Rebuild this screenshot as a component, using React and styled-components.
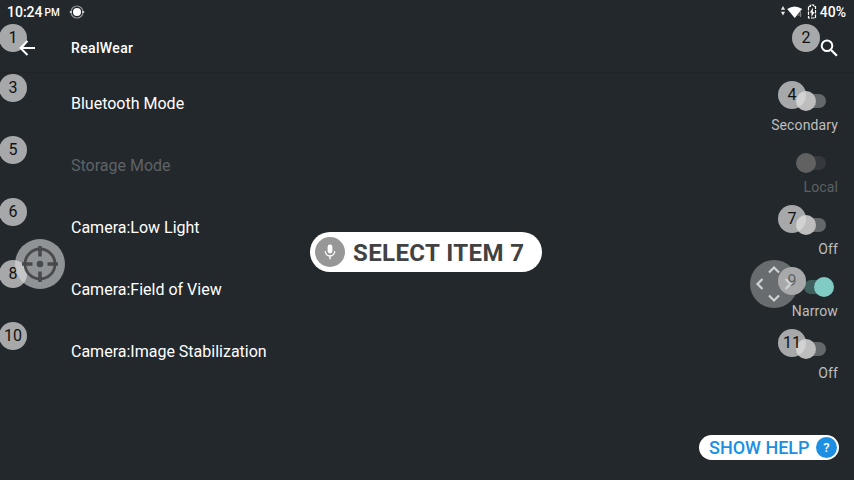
import React from "react";
import styled, { createGlobalStyle } from "styled-components";

const Global = createGlobalStyle`
  * { box-sizing: border-box; }
  body { margin: 0; background: #23282c; font-family: Roboto, "Noto Sans", sans-serif; color: #fff; }
`;

const Screen = styled.div`
  position: relative;
  display: flex;
  flex-direction: column;
  width: 854px;
  height: 480px;
  overflow: hidden;
  background: #23282c;
`;

const StatusBar = styled.header`
  display: flex;
  align-items: center;
  height: 24px;
  padding: 0 8px 0 7px;
  font-size: 14px;
  font-weight: 500;
  line-height: 24px;
`;

const Time = styled.span`
  font-size: 14px;
`;

const Meridiem = styled.span`
  margin: 2px 9px 0 2px;
  font-size: 10px;
`;

const StatusIcons = styled.div`
  display: flex;
  align-items: center;
  margin-left: auto;
`;

const Percent = styled.span`
  margin-left: 3px;
`;

const AppBar = styled.div`
  position: relative;
  display: flex;
  align-items: center;
  height: 49px;
  padding: 0 16px 0 19px;
  border-bottom: 1px solid #202427;
`;

const BackButton = styled.span`
  position: relative;
  z-index: 2;
  display: flex;
`;

const Title = styled.h1`
  margin: 0 auto 0 36px;
  font-size: 14px;
  font-weight: 500;
  letter-spacing: 0.35px;
`;

const List = styled.main`
  display: flex;
  flex-direction: column;
`;

const Row = styled.div`
  position: relative;
  display: flex;
  justify-content: space-between;
  height: 62px;
  padding: 0 16px 0 71px;
`;

const Label = styled.div`
  font-size: 16px;
  line-height: 61px;
  color: ${(p) => (p.$disabled ? "#5f6366" : "#fff")};
`;

const Control = styled.div`
  display: flex;
  flex-direction: column;
  align-items: flex-end;
  padding-top: 18px;
`;

const Track = styled.div`
  position: relative;
  width: 29px;
  height: 14px;
  margin: 3px ${(p) => (p.$on ? 5 : 12)}px 0 0;
  border-radius: 7px;
  background: ${(p) => (p.$on ? "#3f5f5f" : p.$disabled ? "#35393d" : "#64686b")};
`;

const Thumb = styled.div`
  position: absolute;
  top: -3px;
  left: ${(p) => (p.$on ? 10.4 : -1.3)}px;
  width: 20px;
  height: 20px;
  border-radius: 50%;
  background: ${(p) => (p.$on ? "#80cbc4" : p.$disabled ? "#616161" : "#bdbdbd")};
`;

const Value = styled.div`
  margin-top: 9px;
  font-size: 14px;
  line-height: 17px;
  letter-spacing: 0.12px;
  color: ${(p) => (p.$disabled ? "#5c6063" : "#bdbebf")};
`;

const Badge = styled.div`
  position: absolute;
  z-index: 1;
  left: ${(p) => p.$x}px;
  top: ${(p) => p.$y}px;
  width: 28px;
  height: 28px;
  border-radius: 50%;
  background: rgba(217, 217, 218, 0.72);
  color: #111;
  font-size: 16px;
  line-height: 27px;
  text-align: center;
`;

const Floating = styled.div`
  position: absolute;
  z-index: 3;
  left: ${(p) => p.$x}px;
  top: ${(p) => p.$y}px;
  display: flex;
`;

const Toast = styled.div`
  position: absolute;
  z-index: 4;
  left: 310px;
  top: 232px;
  display: flex;
  align-items: center;
  gap: 8px;
  width: 232px;
  height: 40px;
  padding-left: 5px;
  border-radius: 20px;
  background: #fff;
  color: #424242;
  font-size: 24px;
  font-weight: 700;
  letter-spacing: 0.4px;
  white-space: nowrap;
`;

const ToastText = styled.span`
  padding-top: 2px;
`;

const MicDisc = styled.span`
  display: flex;
  flex: none;
  align-items: center;
  justify-content: center;
  width: 30px;
  height: 30px;
  border-radius: 50%;
  background: #979797;
`;

const Help = styled.button`
  position: absolute;
  z-index: 4;
  left: 699px;
  top: 435px;
  display: flex;
  align-items: center;
  justify-content: space-between;
  width: 140px;
  height: 25px;
  padding: 0 2px 0 10px;
  border: 0;
  border-radius: 13px;
  background: #fff;
  color: #1c8fe3;
  font: 500 18px Roboto, sans-serif;
  white-space: nowrap;
`;

const HelpMark = styled.span`
  width: 21px;
  height: 21px;
  border-radius: 50%;
  background: #1c8fe3;
  color: #fff;
  font-size: 13px;
  line-height: 21px;
  text-align: center;
`;

const items = [
  { label: "Bluetooth Mode", value: "Secondary", left: 3, right: 4 },
  { label: "Storage Mode", value: "Local", left: 5, disabled: true },
  { label: "Camera:Low Light", value: "Off", left: 6, right: 7 },
  { label: "Camera:Field of View", value: "Narrow", left: 8, right: 9, on: true },
  { label: "Camera:Image Stabilization", value: "Off", left: 10, right: 11 },
];

function SystemIcon() {
  return (
    <svg width="16" height="14" viewBox="0 0 16 14" fill="none">
      <circle cx="8" cy="7" r="6" stroke="#8f9294" strokeWidth="1.2" />
      <path d="M0.800 7h2.200M13 7h2.200" stroke="#c4c6c7" strokeWidth="1.800" />
      <circle cx="8" cy="7" r="4" fill="#fff" />
    </svg>
  );
}

function NetworkIcons() {
  return (
    <svg width="37" height="16" viewBox="780 4 37 16">
      <path d="M783 6l2.100 3.800h-4.200zM783 15.500l2.100-3.800h-4.200z" fill="#e5e6e6" />
      <path d="M787.200 9Q794.700 4 802.200 9L794.700 18Z" fill="#fff" />
      <path d="M800.500 10.500v6.500M800.500 11l-3 4h4" fill="none" stroke="#7d8183" strokeWidth="1" />
      <path d="M808.500 6.500h1.800V5h3.400v1.500h1.800V18h-7z" fill="none" stroke="#fff" strokeWidth="1.200" strokeDasharray="3.500 1" />
      <path d="M813 7.500l-3.200 5h1.700V17l3-5h-1.800z" fill="#fff" />
    </svg>
  );
}

function BackIcon() {
  return (
    <svg width="16" height="16" viewBox="0 0 16 16" fill="none" stroke="#fff" strokeWidth="2">
      <path d="M16 8H2M8.500 1L1.500 8l7 7" />
    </svg>
  );
}

function SearchIcon() {
  return (
    <svg width="18" height="18" viewBox="0 0 18 18" fill="none" stroke="#fff">
      <circle cx="7" cy="6.800" r="5.300" strokeWidth="2" />
      <path d="M10.900 10.700l6 6" strokeWidth="2.300" />
    </svg>
  );
}

function TargetIcon() {
  return (
    <svg width="50" height="50" viewBox="0 0 50 50" fill="none">
      <circle cx="25" cy="25" r="25" fill="#d8dadd" fillOpacity=".6" />
      <circle cx="25" cy="25" r="15" stroke="#484a4c" strokeWidth="2.800" />
      <path d="M25 7v10.500M25 32.500V43M7 25h10.500M32.500 25H43" stroke="#484a4c" strokeWidth="3.600" />
      <circle cx="25" cy="25" r="3.300" fill="#484a4c" />
    </svg>
  );
}

function PanIcon() {
  return (
    <svg width="48" height="48" viewBox="0 0 48 48" fill="none">
      <circle cx="24" cy="24" r="24" fill="#a8aaac" fillOpacity=".52" />
      <path d="M19 12.500l5-5 5 5M19 35.500l5 5 5-5M12.500 19l-5 5 5 5M35.500 19l5 5-5 5" stroke="#d0d1d2" strokeWidth="2.200" />
    </svg>
  );
}

function MicIcon() {
  return (
    <svg width="12" height="16" viewBox="0 0 12 16" fill="none">
      <rect x="3.600" y="0.500" width="4.800" height="9" rx="2.400" fill="#fff" />
      <path d="M1.300 7.300a4.700 4.700 0 0 0 9.400 0M6 12v3.300" stroke="#fff" strokeWidth="1.400" />
    </svg>
  );
}

function Switch({ on, disabled }) {
  return (
    <Track $on={on} $disabled={disabled}>
      <Thumb $on={on} $disabled={disabled} />
    </Track>
  );
}

export default function App() {
  return (
    <>
      <Global />
      <Screen>
        <StatusBar>
          <Time>10:24</Time>
          <Meridiem>PM</Meridiem>
          <SystemIcon />
          <StatusIcons>
            <NetworkIcons />
            <Percent>40%</Percent>
          </StatusIcons>
        </StatusBar>
        <AppBar>
          <Badge $x={-1} $y={0}>1</Badge>
          <BackButton><BackIcon /></BackButton>
          <Title>RealWear</Title>
          <Badge $x={792} $y={0}>2</Badge>
          <SearchIcon />
        </AppBar>
        <List>
          {items.map((item) => (
            <Row key={item.label}>
              <Badge $x={-1} $y={1}>{item.left}</Badge>
              <Label $disabled={item.disabled}>{item.label}</Label>
              <Control>
                <Switch on={item.on} disabled={item.disabled} />
                <Value $disabled={item.disabled}>{item.value}</Value>
              </Control>
              {item.right && <Badge $x={778} $y={8}>{item.right}</Badge>}
            </Row>
          ))}
        </List>
        <Floating $x={15} $y={239}><TargetIcon /></Floating>
        <Floating $x={750} $y={260}><PanIcon /></Floating>
        <Toast>
          <MicDisc><MicIcon /></MicDisc>
          <ToastText>SELECT ITEM 7</ToastText>
        </Toast>
        <Help>
          SHOW HELP
          <HelpMark>?</HelpMark>
        </Help>
      </Screen>
    </>
  );
}
